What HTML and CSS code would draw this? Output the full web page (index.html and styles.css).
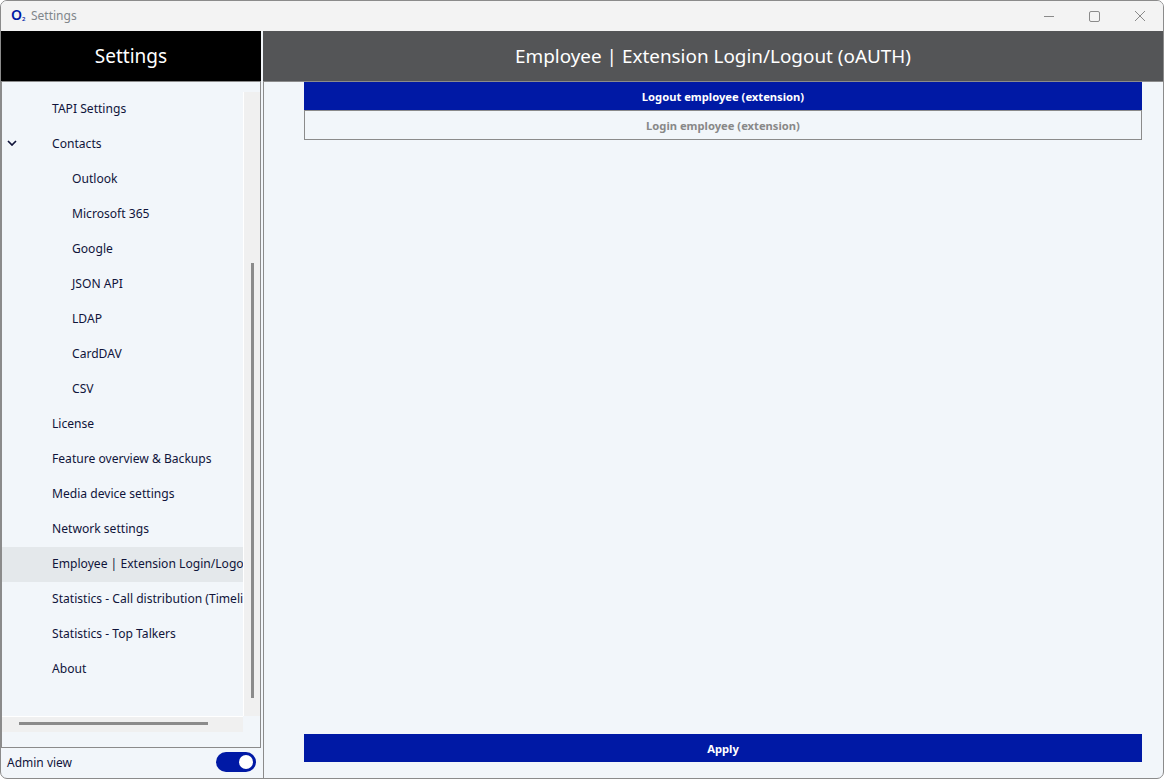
FILE: index.html
```html
<!DOCTYPE html>
<html lang="en">
<head>
<meta charset="utf-8">
<title>Settings</title>
<link rel="stylesheet" href="styles.css">
</head>
<body>
<div class="window">
  <header class="titlebar">
    <div class="app-logo">O<sub>2</sub></div>
    <div class="app-name">Settings</div>
    <div class="win-controls">
      <svg class="win-icon" viewBox="0 0 12 12"><path d="M0 6.5H10"/></svg>
      <svg class="win-icon" viewBox="0 0 12 12"><rect x="0.5" y="1.5" width="10" height="10" rx="1.5"/></svg>
      <svg class="win-icon" viewBox="0 0 12 12"><path d="M1 1L11 11M11 1L1 11"/></svg>
    </div>
  </header>
  <div class="columns">
    <aside class="sidebar">
      <div class="side-head">Settings</div>
      <div class="side-panel">
        <div class="scroll-row">
          <nav class="tree">
            <div class="tree-item">TAPI Settings</div>
            <div class="tree-item">
              <svg class="chevron" viewBox="0 0 10 6"><path d="M1 1L5 5L9 1"/></svg>
              Contacts
            </div>
            <div class="tree-item sub">Outlook</div>
            <div class="tree-item sub">Microsoft 365</div>
            <div class="tree-item sub">Google</div>
            <div class="tree-item sub">JSON API</div>
            <div class="tree-item sub">LDAP</div>
            <div class="tree-item sub">CardDAV</div>
            <div class="tree-item sub">CSV</div>
            <div class="tree-item">License</div>
            <div class="tree-item">Feature overview &amp; Backups</div>
            <div class="tree-item">Media device settings</div>
            <div class="tree-item">Network settings</div>
            <div class="tree-item selected">Employee | Extension Login/Logout (oAUTH)</div>
            <div class="tree-item">Statistics - Call distribution (Timeline)</div>
            <div class="tree-item">Statistics - Top Talkers</div>
            <div class="tree-item">About</div>
          </nav>
          <div class="vscroll"><div class="vthumb"></div></div>
        </div>
        <div class="hscroll"><div class="hthumb"></div></div>
      </div>
      <div class="admin-row">
        <span>Admin view</span>
        <div class="toggle"><div class="knob"></div></div>
      </div>
    </aside>
    <main class="main">
      <div class="main-head">Employee | Extension Login/Logout (oAUTH)</div>
      <div class="main-body">
        <div class="segments">
          <div class="segment active">Logout employee (extension)</div>
          <div class="segment">Login employee (extension)</div>
        </div>
        <button class="apply" type="button">Apply</button>
      </div>
    </main>
  </div>
</div>
</body>
</html>
```
FILE: styles.css
```css
html, body {
  margin: 0;
  height: 100%;
}
body {
  background: #ffffff;
  font-family: "Noto Sans", "Open Sans", sans-serif;
  overflow: hidden;
}
.window {
  box-sizing: border-box;
  width: 1164px;
  height: 779px;
  border: 1px solid #8b8b8b;
  border-radius: 7px;
  background: #f2f6fa;
  display: flex;
  flex-direction: column;
  overflow: hidden;
}
.titlebar {
  height: 30px;
  flex: none;
  background: #f3f3f3;
  display: flex;
  align-items: center;
  padding: 0 0 2px 10px;
  box-sizing: border-box;
}
.app-logo {
  width: 20px;
  color: #0019a5;
  font-size: 14px;
  font-weight: 600;
  line-height: 14px;
}
.app-logo sub {
  font-size: 6px;
  line-height: 0;
  vertical-align: -1px;
}
.app-name {
  font-size: 12px;
  color: #80868b;
}
.win-controls {
  margin-left: auto;
  display: flex;
  gap: 33px;
  padding-right: 17px;
  padding-top: 1px;
}
.win-icon {
  width: 12px;
  height: 12px;
  fill: none;
  stroke: #8a8a8a;
  stroke-width: 1;
}
.columns {
  flex: 1;
  min-height: 0;
  display: flex;
}
.sidebar {
  width: 260px;
  flex: none;
  display: flex;
  flex-direction: column;
}
.side-head {
  height: 50px;
  flex: none;
  background: #000000;
  color: #ffffff;
  font-size: 19px;
  line-height: 51px;
  text-align: center;
}
.side-panel {
  flex: 1;
  min-height: 0;
  border-top: 1px solid #8b8b8b;
  border-right: 1px solid #8b8b8b;
  border-left: 1px solid #8b8b8b;
  padding-top: 10px;
  box-sizing: border-box;
}
.scroll-row {
  display: flex;
  height: 624px;
}
.tree {
  width: 241px;
  flex: none;
  overflow: hidden;
  color: #10143a;
  font-size: 12.1px;
}
.tree-item {
  position: relative;
  height: 35px;
  line-height: 33px;
  padding-left: 50px;
  white-space: nowrap;
  overflow: hidden;
}
.tree-item.sub {
  padding-left: 70px;
}
.tree-item.selected {
  background: #e4e8eb;
}
.chevron {
  position: absolute;
  left: 5px;
  top: 13px;
  width: 10px;
  height: 6px;
  fill: none;
  stroke: #10143a;
  stroke-width: 1.7;
}
.vscroll {
  width: 17px;
  flex: none;
  background: #f0f0f0;
  border-left: 1px solid #ffffff;
  box-sizing: border-box;
  padding: 171px 0 18px 7px;
}
.vthumb {
  width: 3px;
  height: 100%;
  background: #8b8b8b;
}
.hscroll {
  width: 241px;
  height: 16px;
  background: #f0f0f0;
  border-top: 1px solid #ffffff;
  box-sizing: border-box;
  padding: 5px 0 0 17px;
}
.hthumb {
  width: 189px;
  height: 3px;
  background: #8b8b8b;
}
.admin-row {
  height: 30px;
  flex: none;
  border-top: 1px solid #8b8b8b;
  display: flex;
  align-items: center;
  justify-content: space-between;
  padding: 0 5px 0 6px;
  font-size: 12px;
  color: #10143a;
}
.admin-row span {
  margin-bottom: 2px;
}
.toggle {
  width: 40px;
  height: 20px;
  border-radius: 10px;
  background: #0019a5;
  position: relative;
  margin-bottom: 2px;
}
.knob {
  position: absolute;
  right: 3px;
  top: 3px;
  width: 14px;
  height: 14px;
  border-radius: 50%;
  background: #ffffff;
}
.main {
  flex: 1;
  min-width: 0;
  margin-left: 2px;
  display: flex;
  flex-direction: column;
  border-left: 1px solid #8b8b8b;
}
.main-head {
  height: 50px;
  flex: none;
  margin-left: -1px;
  background: #545557;
  color: #ffffff;
  font-size: 18.9px;
  line-height: 50px;
  text-align: center;
  border-bottom: 1px solid #8b8b8b;
}
.main-body {
  flex: 1;
  min-height: 0;
  display: flex;
  flex-direction: column;
  justify-content: space-between;
  padding: 0 21px 16px 40px;
}
.segments {
  display: flex;
  flex-direction: column;
}
.segment {
  height: 29px;
  box-sizing: border-box;
  border: 1px solid #8b8b8b;
  border-top: 0;
  color: #888888;
  font-size: 11.2px;
  font-weight: 700;
  line-height: 29px;
  text-align: center;
}
.segment.active {
  background: #0019a5;
  color: #ffffff;
  border: 0;
  border-bottom: 1px solid #8b8b8b;
}
.apply {
  display: block;
  width: 100%;
  height: 28px;
  border: 0;
  padding: 0;
  background: #0019a5;
  color: #ffffff;
  font: 700 11.2px "Noto Sans", "Open Sans", sans-serif;
}
```
